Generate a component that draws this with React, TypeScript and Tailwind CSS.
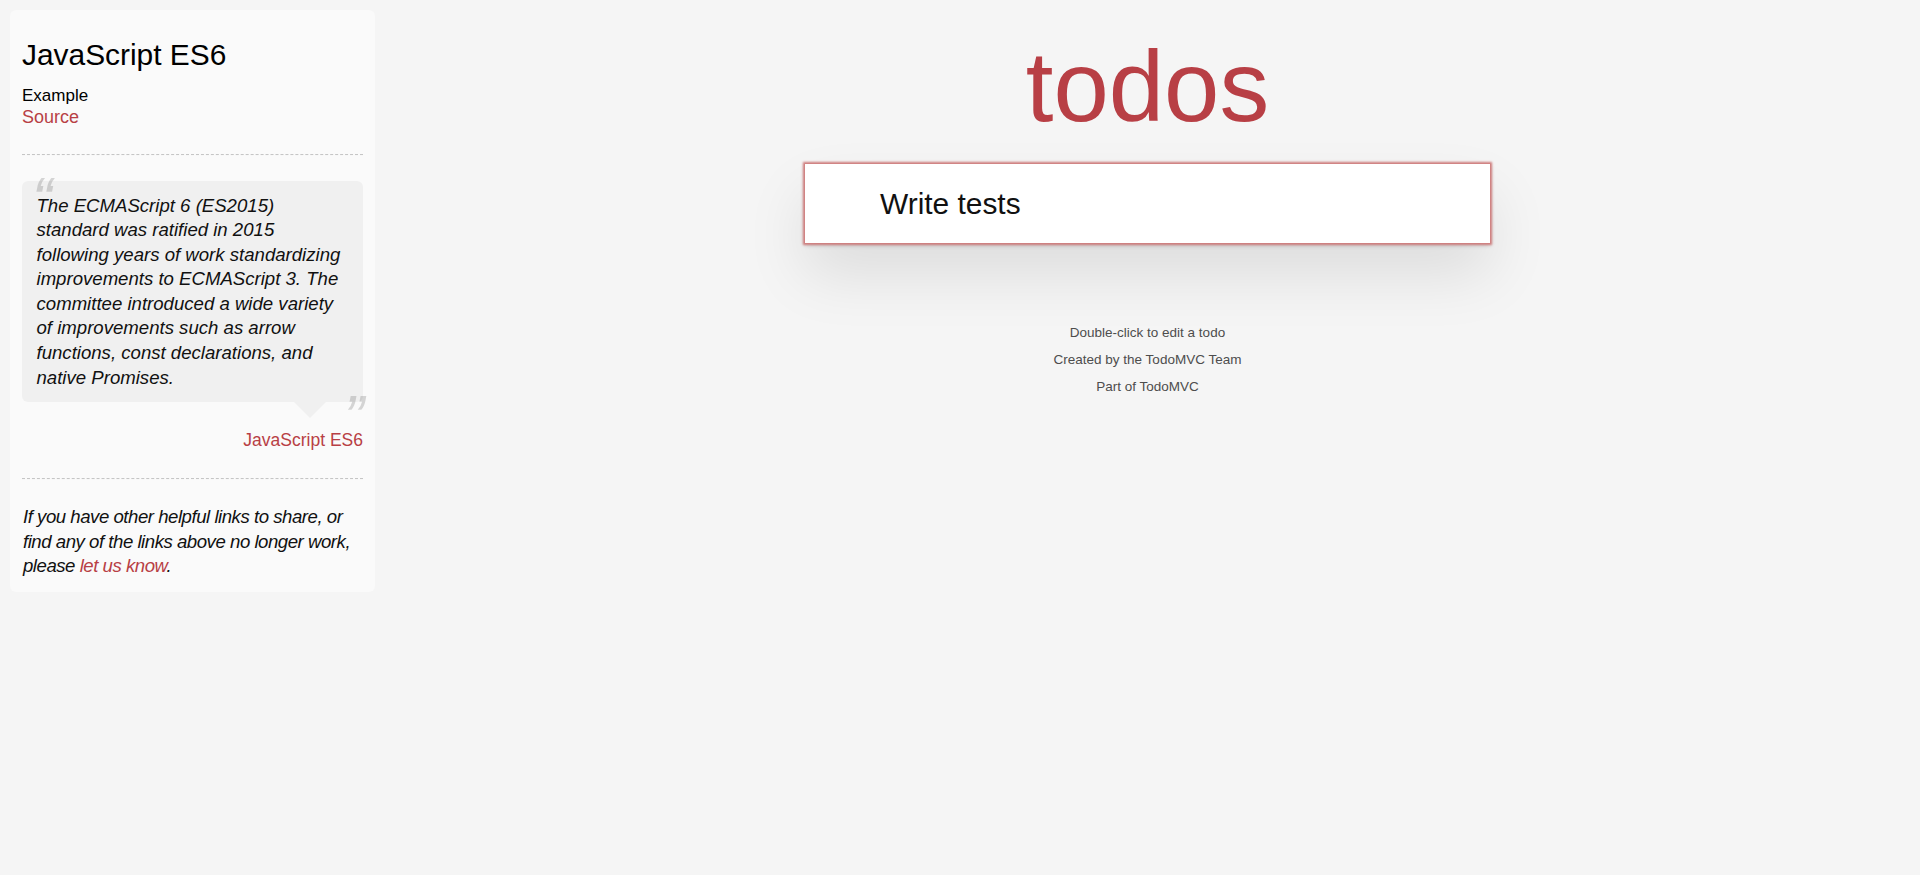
import React from 'react';

const quoteLines = [
    'The ECMAScript 6 (ES2015)',
    'standard was ratified in 2015',
    'following years of work standardizing',
    'improvements to ECMAScript 3. The',
    'committee introduced a wide variety',
    'of improvements such as arrow',
    'functions, const declarations, and',
    'native Promises.',
];

const infoLines = ['Double-click to edit a todo', 'Created by the TodoMVC Team', 'Part of TodoMVC'];

const Divider: React.FC = () => (
    <hr className="border-0 border-t border-b border-dashed border-t-[#c5c5c5] border-b-[#f7f7f7]" />
);

const LearnSidebar: React.FC = () => (
    <aside className="ml-[10px] mt-[10px] w-[365px] shrink-0 self-start rounded-[6px] bg-[#fafafa] px-[12px] pt-[12px] pb-[13px] text-black">
        {/* Header */}
        <header>
            <h3 className="mt-[15px] text-[29.9px] leading-[35px] font-normal">JavaScript ES6</h3>
            <div className="mt-[12.5px] flex flex-col">
                <h5 className="text-[17px] leading-[21px] font-normal">Example</h5>
                <a href="#" className="text-[18px] leading-[22px] text-[#b83f45]">Source</a>
            </div>
        </header>

        <div className="mt-[26px]">
            <Divider />
        </div>

        {/* Quote */}
        <blockquote className="mt-[25.5px]">
            <div className="relative rounded-[6px] bg-[#f0f0f0] pt-[12.5px] pb-[12px] pl-[14.5px] pr-[9px]">
                <span className="absolute left-[10px] top-[-12px] text-[61px] leading-[61px] italic text-black/15">“</span>
                <p className="text-[18.6px] leading-[24.6px] italic text-[#111]">
                    {quoteLines.map((line) => (
                        <span key={line} className="block whitespace-nowrap">{line}</span>
                    ))}
                </p>
                <span className="absolute right-[-1px] bottom-[-46px] text-[61px] leading-[61px] italic text-black/15">”</span>
                <span className="absolute right-[37px] top-full h-0 w-0 border-x-[16px] border-t-[16px] border-x-transparent border-t-[#f0f0f0]" />
            </div>
            <footer className="mt-[26px] text-right text-[17.5px] leading-[24px]">
                <a href="#" className="text-[#b83f45]">JavaScript ES6</a>
            </footer>
        </blockquote>

        <div className="mt-[26px]">
            <Divider />
        </div>

        <p className="mt-[25px] ml-[1px] text-[18.6px] leading-[24.5px] italic tracking-[-0.47px] text-[#111]">
            If you have other helpful links to share, or find any of the links above no longer work, please{' '}
            <a href="#" className="text-[#b83f45]">let us know</a>.
        </p>
    </aside>
);

const TodoMain: React.FC = () => (
    <main className="flex flex-1 flex-col items-center">
        <h1 className="mt-[37px] h-[99px] text-[99.5px] leading-[99px] font-normal text-[#b83f45]">todos</h1>

        {/* Todo app card */}
        <section className="mt-[28px] flex h-[79px] w-[685px] items-center bg-white pl-[75px] shadow-[0_0_2px_2px_#cf7d7d,0_2px_5px_rgba(0,0,0,0.2),0_31px_61px_rgba(0,0,0,0.1)]">
            <span className="text-[29.9px] leading-[41px] text-[#111]">Write tests</span>
        </section>

        <footer className="mt-[83px] flex flex-col gap-[13.5px] text-center text-[13.5px] leading-[13.5px] text-[#4d4d4d]">
            {infoLines.map((line) => (
                <p key={line}>{line}</p>
            ))}
        </footer>
    </main>
);

export default function App() {
    return (
        <div className="flex min-h-screen w-full bg-[#f5f5f5] font-['Liberation_Sans',Arial,sans-serif]">
            <LearnSidebar />
            <TodoMain />
        </div>
    );
}
